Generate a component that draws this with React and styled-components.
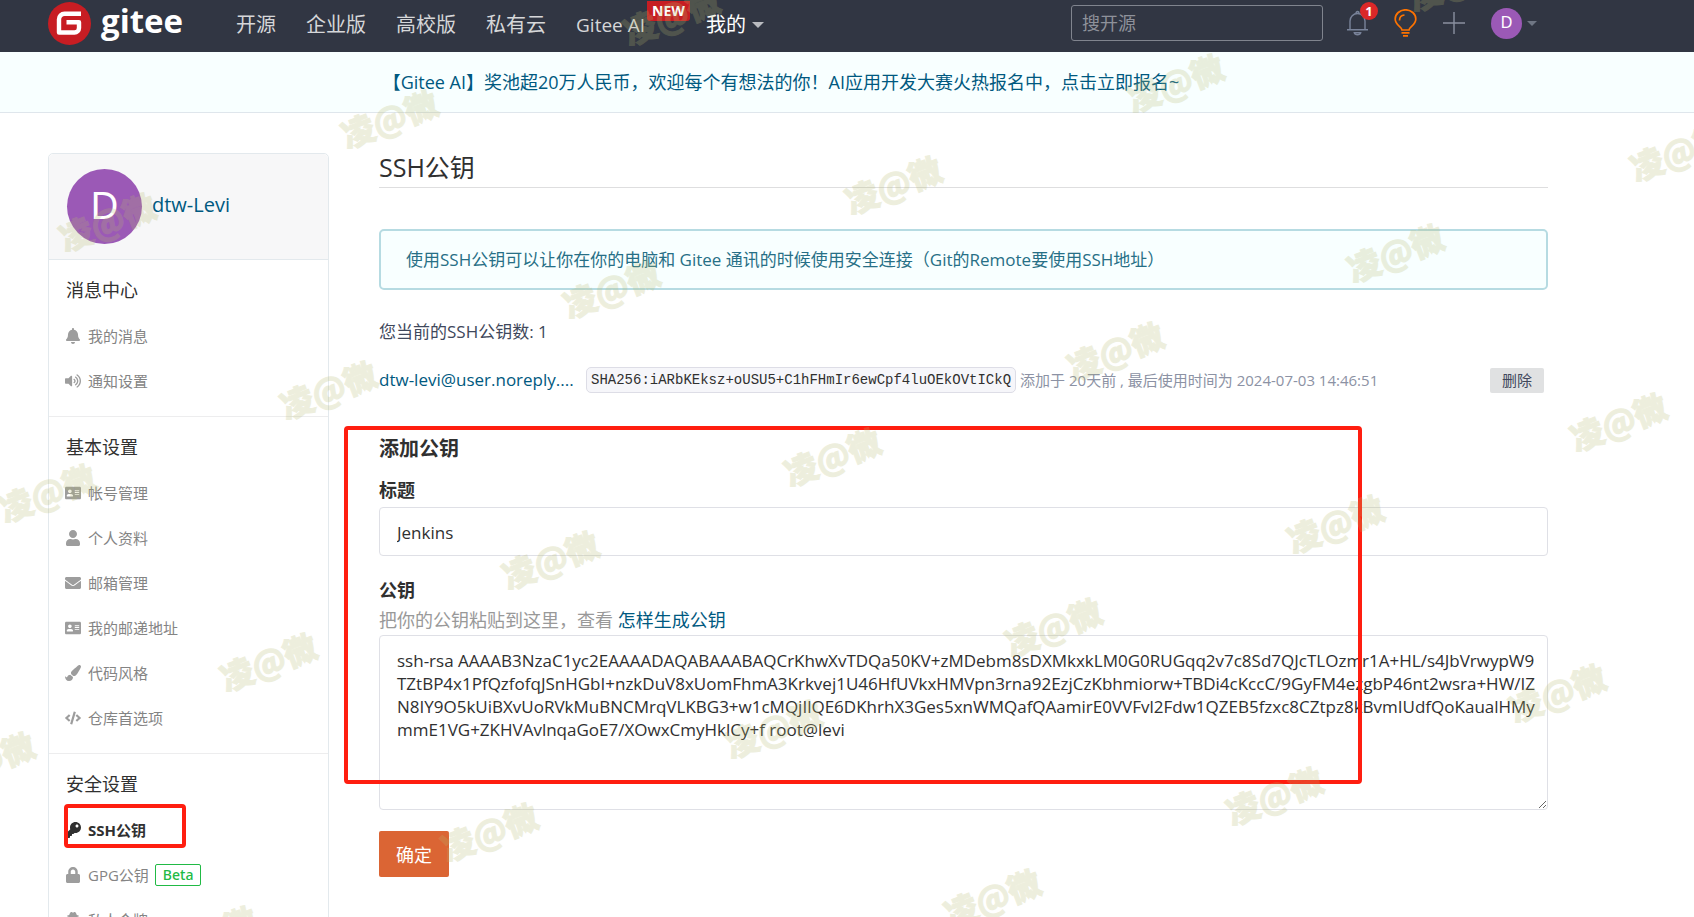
import React from "react";
import styled, { createGlobalStyle, css } from "styled-components";
import {
  FaBell,
  FaVolumeUp,
  FaAddressCard,
  FaUser,
  FaEnvelope,
  FaPaintBrush,
  FaCode,
  FaKey,
  FaLock,
  FaUserSecret,
} from "react-icons/fa";

const sans = `"Open Sans", "Noto Sans CJK SC", sans-serif`;
const mono = `"Liberation Mono", monospace`;

const GlobalStyle = createGlobalStyle`
  *, *::before, *::after { box-sizing: border-box; }
  html { scrollbar-width: none; }
  body { margin: 0; background: #fff; color: #303030; font-family: ${sans}; font-size: 16px; }
  a { text-decoration: none; color: #005980; }
  h1, h2, h3, p, ul { margin: 0; padding: 0; }
  ul { list-style: none; }
  button, input, textarea { font-family: inherit; }
`;

const Page = styled.div`
  position: relative;
  min-height: 100vh;
  overflow: hidden;
`;

/* ---------- top bar ---------- */

const TopBar = styled.header`
  display: flex;
  align-items: center;
  height: 52px;
  padding: 0 157px 6px 48px;
  background: #313643;
`;

const Logo = styled.a`
  display: flex;
  align-items: center;
  gap: 10px;
  color: #fff;
  svg { display: block; }
`;

const LogoText = styled.span`
  padding-bottom: 4px;
  font-size: 33px;
  font-weight: 700;
  line-height: 42px;
`;

const Nav = styled.nav`
  display: flex;
  gap: 30px;
  margin: 4px 0 0 53px;
`;

const NavLink = styled.a`
  position: relative;
  display: flex;
  align-items: center;
  color: ${(p) => (p.$active ? "#fff" : "#d6d7d9")};
  font-size: ${(p) => (p.$latin ? "19px" : "20px")};
  line-height: 30px;
  white-space: nowrap;
  margin-right: ${(p) => (p.$latin ? "31px" : "0")};
`;

const NewBadge = styled.span`
  position: absolute;
  left: 100%;
  bottom: 19px;
  margin-left: 2px;
  padding: 0 5px;
  border-radius: 0 0 3px 3px;
  background: #c71d23;
  color: #fff;
  font-size: 14px;
  font-weight: 700;
  line-height: 20px;
`;

const Caret = styled.span`
  margin-left: ${(p) => (p.$small ? "5px" : "6px")};
  border: solid transparent;
  border-width: ${(p) => (p.$small ? "5px 5px 0" : "6px 6px 0")};
  border-top-color: ${(p) => (p.$small ? "#6f7684" : "#b9bbc0")};
`;

const Search = styled.input`
  width: 252px;
  height: 36px;
  margin: 0 24px 0 auto;
  padding: 0 10px;
  border: 1px solid #80848e;
  border-radius: 3px;
  background: transparent;
  color: #fff;
  font-size: 18px;
  &::placeholder { color: #8e919a; opacity: 1; }
`;

const Tools = styled.div`
  display: flex;
  align-items: center;
  gap: 26px;
`;

const IconButton = styled.button`
  position: relative;
  display: flex;
  align-items: center;
  padding: 0;
  border: 0;
  background: none;
`;

const Count = styled.span`
  position: absolute;
  right: -10px;
  top: -8px;
  width: 18px;
  height: 18px;
  border-radius: 50%;
  background: #db2828;
  color: #fff;
  font-size: 13px;
  font-weight: 700;
  line-height: 18px;
  text-align: center;
`;

const Avatar = styled.span`
  display: flex;
  align-items: center;
  justify-content: center;
  width: ${(p) => p.$size}px;
  height: ${(p) => p.$size}px;
  border-radius: 50%;
  background: #9b59b6;
  color: #fff;
  font-family: "Liberation Sans", sans-serif;
  font-size: ${(p) => p.$text}px;
`;

/* ---------- announcement ---------- */

const Banner = styled.div`
  height: 61px;
  padding: 0 132px 0 0;
  border-bottom: 1px solid #dfe6ec;
  background: #f8ffff;
  font-size: 18px;
  line-height: 60px;
  text-align: center;
`;

/* ---------- body ---------- */

const Body = styled.div`
  display: grid;
  grid-template-columns: 281px minmax(0, 1fr);
  gap: 50px;
  align-items: start;
  padding: 40px 146px 0 48px;
`;

const Sidebar = styled.aside`
  border: 1px solid #e3e9ed;
  border-radius: 5px;
`;

const Profile = styled.div`
  display: flex;
  align-items: center;
  gap: 10px;
  height: 106px;
  padding: 0 18px;
  border-bottom: 1px solid #e3e9ed;
  border-radius: 5px 5px 0 0;
  background: #f7f7f8;
`;

const ProfileName = styled.a`
  padding-bottom: 4px;
  font-size: 20px;
  line-height: 30px;
`;

const Section = styled.section`
  padding: 17px 16px 13px;
  border-bottom: 1px solid #ededee;
`;

const SectionTitle = styled.h3`
  padding-left: 1px;
  margin-bottom: 10px;
  font-size: 18px;
  font-weight: 400;
  line-height: 26px;
`;

const MenuItem = styled.li`
  position: relative;
  display: flex;
  align-items: center;
  height: 45px;
`;

const MenuLink = styled.a`
  display: flex;
  align-items: center;
  gap: 7px;
  color: ${(p) => (p.$active ? "#303030" : "#848484")};
  font-size: 15px;
  font-weight: ${(p) => (p.$active ? 700 : 400)};
  svg { width: 16px; height: 16px; color: ${(p) => (p.$active ? "#303030" : "#9d9d9d")}; }
`;

const Beta = styled.span`
  margin-left: 6px;
  padding: 0 7px;
  border: 1px solid #21ba45;
  border-radius: 2px;
  color: #21ba45;
  font-size: 14px;
  font-family: "Noto Sans", sans-serif;
  font-weight: 500;
  line-height: 20px;
`;

const outline = css`
  position: absolute;
  border: 4px solid #ff1e10;
  border-radius: 4px;
  pointer-events: none;
`;

const ItemOutline = styled.div`
  ${outline}
  left: -1px;
  top: -3px;
  width: 122px;
  height: 44px;
`;

const Title = styled.h1`
  padding-bottom: 6px;
  border-bottom: 1px solid #dededf;
  font-size: 25px;
  font-weight: 400;
  line-height: 28px;
`;

const Notice = styled.p`
  margin-top: 41px;
  padding: 15px 25px;
  border: 2px solid #b6dbe2;
  border-radius: 5px;
  background: #f8ffff;
  color: #276f86;
  font-size: 17px;
  line-height: 27px;
`;

const Total = styled.p`
  margin-top: 29px;
  color: #40485b;
  font-size: 17px;
  line-height: 26px;
`;

const KeyRow = styled.div`
  display: flex;
  align-items: center;
  margin-top: 22px;
  padding-right: 4px;
`;

const KeyName = styled.a`
  width: 193px;
  margin-right: 14px;
  font-size: 17px;
  line-height: 26px;
  white-space: nowrap;
`;

const Fingerprint = styled.code`
  padding: 0 4px;
  border: 1px solid #dddde6;
  border-radius: 5px;
  background: #f6f6fa;
  font-family: ${mono};
  font-size: 14px;
  line-height: 24px;
`;

const KeyMeta = styled.span`
  margin-left: 4px;
  color: #8c92a4;
  font-size: 15px;
  line-height: 22px;
  white-space: nowrap;
`;

const DeleteButton = styled.button`
  height: 25px;
  margin-left: auto;
  padding: 0 12px;
  border: 0;
  border-radius: 2px;
  background: #e0e1e2;
  color: #40485b;
  font-size: 15px;
  line-height: 25px;
`;

const Form = styled.form`
  position: relative;
  display: flex;
  flex-direction: column;
  align-items: stretch;
  margin-top: 42px;
`;

const FormTitle = styled.h2`
  font-size: 20px;
  line-height: 28px;
`;

const Label = styled.label`
  margin-top: ${(p) => (p.$first ? "14px" : "21px")};
  font-size: 18px;
  font-weight: 700;
  line-height: 26px;
`;

const field = css`
  display: block;
  width: 100%;
  border: 1px solid #dfe0e6;
  border-radius: 4px;
  background: transparent;
  color: #303030;
  font-size: 17px;
  outline: none;
`;

const TextField = styled.input`
  ${field}
  height: 49px;
  margin-top: 4px;
  padding: 2px 17px 0;
`;

const KeyField = styled.textarea`
  ${field}
  height: 175px;
  margin-top: 2px;
  padding: 13px 17px;
  line-height: 23px;
  white-space: pre;
  overflow: hidden;
  resize: vertical;
`;

const Hint = styled.p`
  margin-top: 4px;
  color: #999;
  font-size: 18px;
  line-height: 26px;
`;

const Submit = styled.button`
  align-self: flex-start;
  height: 46px;
  margin-top: 21px;
  padding: 0 17px;
  border: 0;
  border-radius: 2px;
  background: #db6534;
  color: #fff;
  font-size: 18px;
`;

const FormOutline = styled.div`
  ${outline}
  left: -35px;
  right: 186px;
  top: -9px;
  height: 358px;
`;

/* ---------- watermark ---------- */

const MarkLayer = styled.div`
  position: absolute;
  inset: 0;
  overflow: hidden;
  pointer-events: none;
`;

const Mark = styled.span`
  position: absolute;
  left: ${(p) => p.$x}px;
  top: ${(p) => p.$y}px;
  width: 120px;
  margin: -26px 0 0 -62px;
  color: #b6ba6e;
  opacity: 0.23;
  font-family: "Noto Sans CJK SC", sans-serif;
  font-size: 33px;
  font-weight: 900;
  line-height: 48px;
  text-align: center;
  white-space: nowrap;
  -webkit-text-stroke: 1px #b6ba6e;
  transform: rotate(-21deg);
`;

const marks = [
  [673, 17], [1458, -17], [391, 120], [1177, 84], [1680, 153],
  [109, 223], [895, 186], [1397, 254], [613, 290], [330, 391],
  [1117, 352], [1620, 423], [834, 458], [49, 494], [1337, 525],
  [552, 561], [1055, 628], [270, 663], [1559, 694], [775, 730],
  [-12, 762], [1276, 797], [491, 833], [994, 899], [210, 936],
];

/* ---------- drawings ---------- */

const GiteeMark = () => (
  <svg width="43" height="43" viewBox="0 0 43 43" aria-hidden="true">
    <circle cx="21.500" cy="21.500" r="21.500" fill="#c71d23" />
    <path
      d="M33 11.800H16.500a5.500 5.500 0 0 0-5.500 5.500V30.500H26.500a4.500 4.500 0 0 0 4.500-4.500V20.200H18.500"
      fill="none"
      stroke="#fff"
      strokeWidth="4.400"
      strokeLinejoin="round"
    />
  </svg>
);

const BellIcon = () => (
  <svg width="21" height="26" viewBox="0 0 21 26" fill="none" stroke="#79839a" strokeWidth="1.400" aria-hidden="true">
    <path d="M3 19.500V11a7.500 7.500 0 0 1 15 0v8.500M0 19.700h21M9 3a1.500 1.500 0 0 1 3 0M7.300 22.800c.6 2.600 5.800 2.600 6.400 0z" />
  </svg>
);

const BulbIcon = () => (
  <svg width="23" height="28" viewBox="0 0 23 28" fill="none" stroke="#fe7300" strokeWidth="1.700" aria-hidden="true">
    <path d="M8 21c0-3.500-6.800-4.500-6.800-11a10.300 9.200 0 0 1 20.600 0c0 6.500-6.800 7.500-6.800 11zM7.500 23.800h8M9 26.800h5" />
    <path d="M5.500 11.500c0-3 1.800-5.200 5-5.500" />
  </svg>
);

const PlusIcon = () => (
  <svg width="22" height="22" viewBox="0 0 22 22" stroke="#8a90a0" strokeWidth="1.400" aria-hidden="true">
    <path d="M11 0v22M0 11h22" />
  </svg>
);

/* ---------- data ---------- */

const sections = [
  {
    title: "消息中心",
    items: [
      { icon: FaBell, text: "我的消息" },
      { icon: FaVolumeUp, text: "通知设置" },
    ],
  },
  {
    title: "基本设置",
    items: [
      { icon: FaAddressCard, text: "帐号管理" },
      { icon: FaUser, text: "个人资料" },
      { icon: FaEnvelope, text: "邮箱管理" },
      { icon: FaAddressCard, text: "我的邮递地址" },
      { icon: FaPaintBrush, text: "代码风格" },
      { icon: FaCode, text: "仓库首选项" },
    ],
  },
  {
    title: "安全设置",
    items: [
      { icon: FaKey, text: "SSH公钥", active: true },
      { icon: FaLock, text: "GPG公钥", beta: true },
      { icon: FaUserSecret, text: "私人令牌" },
    ],
  },
];

const publicKey = [
  "ssh-rsa AAAAB3NzaC1yc2EAAAADAQABAAABAQCrKhwXvTDQa50KV+zMDebm8sDXMkxkLM0G0RUGqq2v7c8Sd7QJcTLOzmr1A+HL/s4JbVrwypW9",
  "TZtBP4x1PfQzfofqJSnHGbI+nzkDuV8xUomFhmA3Krkvej1U46HfUVkxHMVpn3rna92EzjCzKbhmiorw+TBDi4cKccC/9GyFM4ezgbP46nt2wsra+HW/IZ",
  "N8IY9O5kUiBXvUoRVkMuBNCMrqVLKBG3+w1cMQjIlQE6DKhrhX3Ges5xnWMQafQAamirE0VVFvl2Fdw1QZEB5fzxc8CZtpz8kBvmIUdfQoKaualHMy",
  "mmE1VG+ZKHVAvlnqaGoE7/XOwxCmyHklCy+f root@levi",
].join("\n");

export default function App() {
  return (
    <Page>
      <GlobalStyle />
      <TopBar>
        <Logo href="#">
          <GiteeMark />
          <LogoText>gitee</LogoText>
        </Logo>
        <Nav>
          <NavLink href="#">开源</NavLink>
          <NavLink href="#">企业版</NavLink>
          <NavLink href="#">高校版</NavLink>
          <NavLink href="#">私有云</NavLink>
          <NavLink href="#" $latin>
            Gitee AI
            <NewBadge>NEW</NewBadge>
          </NavLink>
          <NavLink href="#" $active>
            我的
            <Caret />
          </NavLink>
        </Nav>
        <Search type="text" placeholder="搜开源" aria-label="搜开源" />
        <Tools>
          <IconButton type="button" aria-label="通知">
            <BellIcon />
            <Count>1</Count>
          </IconButton>
          <IconButton type="button" aria-label="建议">
            <BulbIcon />
          </IconButton>
          <IconButton type="button" aria-label="新建">
            <PlusIcon />
          </IconButton>
          <IconButton type="button" aria-label="用户菜单">
            <Avatar $size={31} $text={16}>D</Avatar>
            <Caret $small />
          </IconButton>
        </Tools>
      </TopBar>
      <Banner>
        <a href="#">【Gitee AI】奖池超20万人民币，欢迎每个有想法的你！AI应用开发大赛火热报名中，点击立即报名~</a>
      </Banner>
      <Body>
        <Sidebar>
          <Profile>
            <Avatar $size={75} $text={38}>D</Avatar>
            <ProfileName href="#">dtw-Levi</ProfileName>
          </Profile>
          {sections.map((section) => (
            <Section key={section.title}>
              <SectionTitle>{section.title}</SectionTitle>
              <ul>
                {section.items.map(({ icon: Icon, text, active, beta }) => (
                  <MenuItem key={text}>
                    <MenuLink href="#" $active={active}>
                      <Icon />
                      {text}
                    </MenuLink>
                    {beta && <Beta>Beta</Beta>}
                    {active && <ItemOutline />}
                  </MenuItem>
                ))}
              </ul>
            </Section>
          ))}
        </Sidebar>
        <main>
          <Title>SSH公钥</Title>
          <Notice>使用SSH公钥可以让你在你的电脑和 Gitee 通讯的时候使用安全连接（Git的Remote要使用SSH地址）</Notice>
          <Total>您当前的SSH公钥数: 1</Total>
          <KeyRow>
            <KeyName href="#">dtw-levi@user.noreply....</KeyName>
            <Fingerprint>SHA256:iARbKEksz+oUSU5+C1hFHmIr6ewCpf4luOEkOVtICkQ</Fingerprint>
            <KeyMeta>添加于 20天前 , 最后使用时间为 2024-07-03 14:46:51</KeyMeta>
            <DeleteButton type="button">删除</DeleteButton>
          </KeyRow>
          <Form onSubmit={(e) => e.preventDefault()}>
            <FormTitle>添加公钥</FormTitle>
            <Label htmlFor="key-title" $first>标题</Label>
            <TextField id="key-title" type="text" defaultValue="Jenkins" />
            <Label htmlFor="key-value">公钥</Label>
            <Hint>
              把你的公钥粘贴到这里，查看 <a href="#">怎样生成公钥</a>
            </Hint>
            <KeyField id="key-value" defaultValue={publicKey} spellCheck={false} />
            <Submit type="submit">确定</Submit>
            <FormOutline />
          </Form>
        </main>
      </Body>
      <MarkLayer aria-hidden="true">
        {marks.map(([x, y]) => (
          <Mark key={`${x}-${y}`} $x={x} $y={y}>凌@微</Mark>
        ))}
      </MarkLayer>
    </Page>
  );
}
